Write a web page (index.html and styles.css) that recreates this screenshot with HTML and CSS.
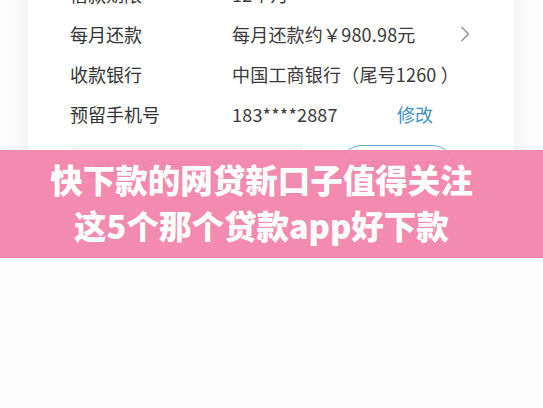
FILE: index.html
```html
<!DOCTYPE html>
<html>
<head>
    <title>快下款的网贷新口子值得关注</title>
    <link rel="stylesheet" href="styles.css">
</head>
<body>
    <div class="card">
        <div class="row">
            <span class="label">借款期限</span>
            <span class="value">12个月</span>
        </div>
        <div class="row">
            <span class="label">每月还款</span>
            <span class="value">每月还款约￥980.98元</span>
            <svg class="chevron" width="10" height="16" viewBox="0 0 10 16">
                <polyline points="1.5,1 8.5,8 1.5,15" fill="none" stroke="#999" stroke-width="1.6"/>
            </svg>
        </div>
        <div class="row">
            <span class="label">收款银行</span>
            <span class="value">中国工商银行（尾号1260 ）</span>
        </div>
        <div class="row">
            <span class="label">预留手机号</span>
            <span class="value phone">183****2887</span>
            <span class="link">修改</span>
        </div>
        <div class="verify">
            <div class="code-input">请输入短信验证码</div>
            <div class="code-btn">获取验证码</div>
        </div>
    </div>

    <div class="banner">
        快下款的网贷新口子值得关注<br>
        这5个那个贷款app好下款
    </div>
</body>
</html>
```

FILE: styles.css
```css
body {
    margin: 0;
    background: #fdfdfd;
    font-family: "Noto Sans CJK SC", "Noto Sans", sans-serif;
    height: 408px;
    overflow: hidden;
    position: relative;
}
.card {
    margin: -26px 29px 0 28px;
    padding: 0 42px 29px;
    background: #fff;
    box-shadow: 0 0 24px rgba(0, 0, 0, 0.07);
}
.row {
    display: flex;
    align-items: center;
    height: 40px;
    font-size: 18px;
    color: #333;
}
.label {
    width: 162px;
}
.value {
    color: #3a3a3a;
    letter-spacing: 0.2px;
}
.phone {
    width: 165px;
}
.link {
    color: #3b8fc6;
}
.chevron {
    margin-left: auto;
    margin-right: 2px;
}
.verify {
    display: flex;
    gap: 36px;
    margin-top: 11px;
    margin-left: 2px;
}
.code-input {
    width: 217px;
    height: 46px;
    padding-left: 14px;
    background: #f5f5f5;
    border-radius: 4px;
    color: #aaa;
    font-size: 18px;
    line-height: 46px;
}
.code-btn {
    width: 114px;
    height: 44px;
    border: 1px solid #5aaad8;
    border-radius: 23px;
    color: #777;
    font-size: 18px;
    line-height: 44px;
    text-align: center;
}
.banner {
    position: absolute;
    top: 150px;
    left: 0;
    right: 0;
    height: 108px;
    padding: 6px 20px 0 0;
    box-sizing: border-box;
    background: rgba(242, 132, 172, 0.94);
    color: #fff;
    font-weight: 900;
    font-size: 32.5px;
    line-height: 46px;
    text-align: center;
}
```
